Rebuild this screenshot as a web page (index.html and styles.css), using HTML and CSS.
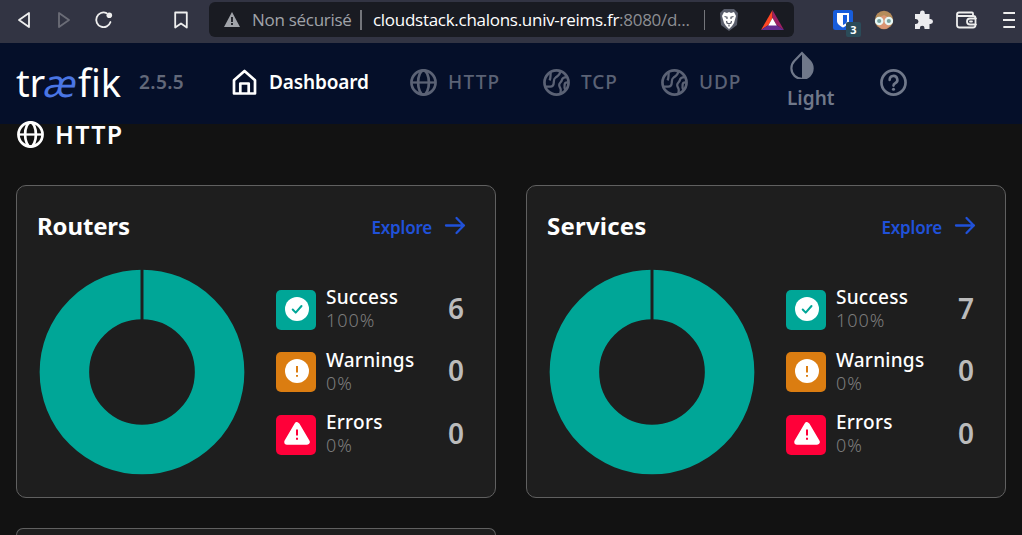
FILE: index.html
```html
<!DOCTYPE html>
<html lang="en">
<head>
<meta charset="utf-8">
<title>Traefik</title>
<link rel="stylesheet" href="styles.css">
</head>
<body>
<svg class="defs" aria-hidden="true">
  <symbol id="globe" viewBox="0 0 26 26"><g fill="none" stroke="currentColor" stroke-width="2.600"><circle cx="13" cy="13" r="11.600"/><ellipse cx="13" cy="13" rx="5.2" ry="11.600"/><path d="M1.500 13h23" stroke-width="2.200"/></g></symbol>
  <symbol id="net" viewBox="0 0 26 26"><g fill="none" stroke="currentColor" stroke-width="2.200" stroke-linejoin="round"><circle cx="13" cy="13" r="11.600" stroke-width="2.600"/><path d="M2 17h5c2.300 0 3.300-1.500 3.400-4 .1-2.400-.1-3.600 1.600-4.700 2.200-1.500 4.300-2.300 4.700-6M7.500 3.500c-.6 3 .2 5-1.200 7.500M23 7.800c-3.200 0-4.500.8-4.900 3-.3 1.900-2.500 2.200-2.500 4.700 0 2.300 1.700 2.700 1.500 5.100l-.3 3M24 13c-1.900-.2-3 .6-3.200 2.100-.2 1.500-.3 3.400.6 4.900"/></g></symbol>
  <symbol id="arrow" viewBox="0 0 22 20"><path d="M2 9.500h18M12.500 2l7.300 7.500-7.300 7.500" fill="none" stroke="currentColor" stroke-width="2.300" stroke-linecap="round" stroke-linejoin="round"/></symbol>
  <symbol id="donut" viewBox="0 0 206 206"><circle cx="103" cy="103" r="77.600" fill="none" stroke="#00a697" stroke-width="49.500"/><path d="M103 0v51" stroke="#1e1e1e" stroke-width="3"/></symbol>
  <symbol id="ok" viewBox="0 0 40 40"><circle cx="21" cy="19" r="12" fill="#fff"/><path d="m16.700 19.500 3 3.100 5.800-6.600" fill="none" stroke="currentColor" stroke-width="2" stroke-linecap="round" stroke-linejoin="round"/></symbol>
  <symbol id="warn" viewBox="0 0 40 40"><circle cx="21" cy="19" r="12" fill="#fff"/><path d="M21 14v6.500M21 23v1.800" stroke="currentColor" stroke-width="2"/></symbol>
  <symbol id="err" viewBox="0 0 40 40"><path d="M21 10 31 27H11Z" fill="#fff" stroke="#fff" stroke-width="5.500" stroke-linejoin="round"/><path d="M21 14.500v6M21 22.800v2" stroke="currentColor" stroke-width="2"/></symbol>
</svg>

<div class="browser">
  <svg class="back" width="14" height="18" viewBox="0 0 14 18"><path d="M12 2v14L2 9Z" class="line"/></svg>
  <svg class="forward" width="14" height="18" viewBox="0 0 14 18"><path d="M2 2v14l10-7Z" class="line"/></svg>
  <svg class="reload" width="20" height="20" viewBox="0 0 20 20"><path d="M12.500 3.100A7.300 7.300 0 1 0 16.500 12" class="line"/><circle cx="15.300" cy="5.200" r="2.800" fill="#eee"/></svg>
  <svg class="bookmark" width="14" height="18" viewBox="0 0 14 18"><path d="M1.200 1.500h11.600v15L7 12.500l-5.800 4Z" class="line"/></svg>
  <div class="address">
    <svg class="insecure" width="16" height="15" viewBox="0 0 16 15"><path d="M8 0l8 15H0Z" fill="#a0a3a9"/><path d="M8 5v5M8 11v2" stroke="#191b22" stroke-width="1.800"/></svg>
    <span class="security">Non sécurisé</span>
    <i class="divider"></i>
    <span class="url">cloudstack.chalons.univ-reims.fr<span>:8080/d...</span></span>
    <i class="divider end"></i>
    <svg class="brave" width="20" height="24" viewBox="0 0 20 24"><path d="M5 1h10l4 4-1 12-8 6-8-6L1 5Z" fill="#595d6b"/><path d="m5 4 3 1 2-1 2 1 3-1 2 4-2 7-2 3-3 3-3-3-2-3-2-7Z" fill="#fff"/><path d="m5.500 8.500 2.500.8v1.700M14.500 8.500l-2.500.8v1.700M7.500 13l.5 2 2 .8 2-.8.500-2M10 17v1.500" fill="none" stroke="#555966" stroke-width="1.200"/></svg>
    <svg width="23" height="20" viewBox="0 0 23 20"><path d="M11.500 0v8L7.500 15 0 20Z" fill="#ff4724"/><path d="M11.500 0 23 20l-7.500-5-4-7Z" fill="#9e1f63"/><path d="M0 20l7.500-5h8l7.500 5Z" fill="#662d91"/><path d="m11.500 8 4.200 7.500H7.300Z" fill="#fff"/></svg>
  </div>
  <div class="vault">
    <svg width="20" height="20" viewBox="0 0 20 20"><rect width="20" height="20" rx="2.500" fill="#175ddc"/><path d="M4 3h12v8c0 3-3 5-6 6.500C7 16 4 14 4 11Z" fill="#fff"/><path d="M10 5h4v6c0 2-2 3-4 4Z" fill="#175ddc"/></svg>
    <b>3</b>
  </div>
  <svg class="avatar" width="20" height="20" viewBox="0 0 20 20"><circle cx="10" cy="10" r="9.200" fill="#b58a5a"/><path d="M3 9q1-5 7-6 6 1 7 6v5q-3 5-7 5t-7-5Z" fill="#d99573"/><path d="M2 8q3-5 8-6 6 1 8 6-5-1-8-3-3 2-8 3" fill="#b48d5b"/><circle cx="5.200" cy="11" r="3.200" fill="#76a09e" stroke="#e6f7f5" stroke-width="2.200"/><circle cx="14.800" cy="11" r="3.200" fill="#76a09e" stroke="#e6f7f5" stroke-width="2.200"/></svg>
  <svg class="puzzle" width="19" height="20" viewBox="0 0 19 20"><path d="M1 4h5V3a2.400 2.400 0 0 1 4.800 0v1h4.700v5h1a2.500 2.500 0 0 1 0 5h-1v5h-5v-1a2.300 2.300 0 0 0-4.600 0v1H1v-5h1a2.500 2.500 0 0 0 0-5H1Z" fill="#ececef"/></svg>
  <svg class="wallet" width="21" height="18" viewBox="0 0 21 18"><path d="M17 4V2.500Q17 1.500 16 1.500H3Q1 1.500 1 3.500V14q0 2.500 2.500 2.500H17q2.500 0 2.500-2.500V7q0-2-2-2H3Q1 5 1 3M20 7.500h-6a3 3 0 0 0 0 6h6M14 10.500h2" class="line"/></svg>
  <svg class="menu" width="12" height="18" viewBox="0 0 12 18"><path d="M1 2h11M0 9h12M1 16h11" class="line"/></svg>
</div>

<header class="nav">
  <div class="logo">tr<em>æ</em>fik</div>
  <span class="version">2.5.5</span>
  <a class="item active home"><svg width="26" height="27" viewBox="0 0 26 27"><path d="M2.500 11.200 13 2l10.500 9.200v13.300h-21ZM8.800 24V14.500h8.400V24" fill="none" stroke="currentColor" stroke-width="2.700" stroke-linejoin="round"/></svg><span>Dashboard</span></a>
  <a class="item http"><svg><use href="#globe"/></svg><span>HTTP</span></a>
  <a class="item tcp"><svg><use href="#net"/></svg><span>TCP</span></a>
  <a class="item udp"><svg><use href="#net"/></svg><span>UDP</span></a>
  <a class="theme"><svg width="24" height="28" viewBox="0 0 24 28"><path d="M12 2 4.300 10a10.600 10.600 0 1 0 15.400 0Z" fill="none" stroke="currentColor" stroke-width="2.200"/><path d="M12 2l7.700 8a10.600 10.600 0 0 1-7.700 18Z" fill="currentColor"/></svg><span>Light</span></a>
  <svg class="help" viewBox="0 0 26 26"><circle cx="13" cy="13" r="11.600" fill="none" stroke="currentColor" stroke-width="2.600"/><path d="M9.300 10.500a3.700 3.700 0 1 1 5.300 3.200q-1.600.8-1.600 2.300" fill="none" stroke="currentColor" stroke-width="2.500" stroke-linecap="round"/><circle cx="13" cy="19.500" r="1.500" fill="currentColor"/></svg>
</header>

<main>
  <h1><svg><use href="#globe"/></svg><span>HTTP</span></h1>
  <div class="grid">
    <section class="card">
      <div class="head"><h2>Routers</h2><a><span>Explore</span><svg><use href="#arrow"/></svg></a></div>
      <div class="body">
        <svg class="donut"><use href="#donut"/></svg>
        <ul>
          <li><svg class="state ok"><use href="#ok"/></svg><div><b>Success</b><small>100%</small></div><strong>6</strong></li>
          <li><svg class="state warn"><use href="#warn"/></svg><div><b>Warnings</b><small>0%</small></div><strong>0</strong></li>
          <li><svg class="state err"><use href="#err"/></svg><div><b>Errors</b><small>0%</small></div><strong>0</strong></li>
        </ul>
      </div>
    </section>
    <section class="card">
      <div class="head"><h2 class="wide">Services</h2><a><span>Explore</span><svg><use href="#arrow"/></svg></a></div>
      <div class="body">
        <svg class="donut"><use href="#donut"/></svg>
        <ul>
          <li><svg class="state ok"><use href="#ok"/></svg><div><b>Success</b><small>100%</small></div><strong>7</strong></li>
          <li><svg class="state warn"><use href="#warn"/></svg><div><b>Warnings</b><small>0%</small></div><strong>0</strong></li>
          <li><svg class="state err"><use href="#err"/></svg><div><b>Errors</b><small>0%</small></div><strong>0</strong></li>
        </ul>
      </div>
    </section>
    <section class="card next"></section>
  </div>
</main>
</body>
</html>
```

FILE: styles.css
```css
* { box-sizing: border-box; }
body { margin: 0; height: 535px; overflow: hidden; background: #121212; color: #fff; font-family: "Noto Sans", "Open Sans", sans-serif; display: flex; flex-direction: column; }
svg { display: block; flex: none; }
.defs { width: 0; height: 0; position: absolute; }
.line { fill: none; stroke: #eee; stroke-width: 1.8; stroke-linejoin: round; stroke-linecap: round; }

.browser { height: 43px; flex: none; display: flex; align-items: center; background: #323443; padding: 0 0 4px 17px; white-space: nowrap; }
.forward { margin-left: 26px; opacity: .3; }
.reload { margin-left: 23px; }
.bookmark { margin-left: 60px; }
.address { margin-left: 21px; width: 585px; height: 35px; flex: none; border-radius: 6px; background: #191b22; display: flex; align-items: center; padding-left: 15px; font-family: "Open Sans", sans-serif; font-size: 17px; letter-spacing: -.28px; }
.security { width: 108px; margin-left: 12px; color: #a0a3a9; }
.divider { width: 2px; height: 20px; background: #74767b; }
.url { width: 331px; margin-left: 11px; }
.url span { color: #8c8e93; }
.divider.end { width: 1px; }
.brave { margin: 0 22px 0 14px; }
.vault { position: relative; margin-left: 39px; }
.vault b { position: absolute; left: 13px; top: 12px; width: 15px; height: 15px; border-radius: 2px; background: #2b4b59; font: bold 11px/15px "Open Sans", sans-serif; text-align: center; }
.avatar { margin-left: 21px; }
.puzzle { margin-left: 20px; }
.wallet { margin-left: 23px; }
.menu { margin-left: 26px; }

.nav { height: 81px; flex: none; background: #050f29; display: flex; align-items: center; color: #5b6275; padding: 0 0 3px 16px; font-size: 19px; font-weight: 600; white-space: nowrap; }
.logo { width: 123px; font: 400 38px/50px "Noto Sans", sans-serif; letter-spacing: -.1px; color: #fff; }
.logo em { display: inline-block; font-style: normal; color: #4a76e4; transform: skewX(-12deg); }
.version { width: 92px; color: #626879; letter-spacing: .4px; }
.item { display: flex; align-items: center; gap: 11px; }
.item svg, h1 svg { width: 27px; height: 27px; }
.active { color: #fff; letter-spacing: -.15px; }
.home { width: 179px; }
.http { width: 133px; letter-spacing: 1.2px; }
.tcp { width: 118px; letter-spacing: 1px; }
.udp { width: 126px; letter-spacing: .9px; }
.http, .tcp, .udp { font-weight: 500; }
.theme { width: 93px; color: #70788a; line-height: 32px; align-self: flex-start; padding-top: 8px; }
.theme svg { margin-left: 3px; }
.theme span { display: block; margin-top: 3px; }
.help { width: 27px; height: 27px; color: #70788a; }

main { flex: 1; min-height: 0; padding: 0 16px; margin-top: -3px; }
h1 { display: flex; align-items: center; gap: 11px; margin: 0 0 37px 1px; height: 27px; font-size: 25px; font-weight: 600; letter-spacing: 1.3px; }
h1 span { margin-top: -2px; }
.grid { display: grid; grid-template-columns: 480px 480px; grid-template-rows: 313px 7px; gap: 30px; }
.card { background: #1e1e1e; border: 1px solid #606060; border-radius: 10px; padding: 20px 29px 0 20px; }
.card.next { border-bottom: 0; border-radius: 10px 10px 0 0; padding: 0; }
.head { height: 42px; display: flex; justify-content: space-between; align-items: center; }
h2 { margin: -4px 0 0; font-size: 24px; font-weight: 700; letter-spacing: -.15px; }
h2.wide { letter-spacing: .2px; }
.head a { display: flex; align-items: center; gap: 12px; color: #2051d9; font-size: 17px; font-weight: 600; letter-spacing: -.2px; }
.head a svg { width: 22px; height: 20px; margin-top: -2px; }
.body { display: flex; margin: 21px 0 0 2px; }
.donut { width: 206px; height: 206px; }
ul { list-style: none; margin: 17px 0 0 31px; padding: 0; flex: 1; }
li { display: flex; height: 62.5px; }
.state { width: 40px; height: 40px; margin-top: 3.5px; border-radius: 5px; }
.state.ok { background: #00a697; color: #00a697; }
.state.warn { background: #db7d11; color: #db7d11; }
.state.err { background: #ff0039; color: #ff0039; }
li div { width: 122px; margin-left: 10px; }
li b { display: block; font-size: 19px; line-height: 23px; font-weight: 500; letter-spacing: .25px; }
li small { display: block; font-size: 18px; line-height: 23px; font-weight: 300; letter-spacing: 1px; color: #7c7c7c; }
li strong { margin-top: .5px; font-size: 28px; line-height: 43px; font-weight: 600; color: #bbb; }
```
